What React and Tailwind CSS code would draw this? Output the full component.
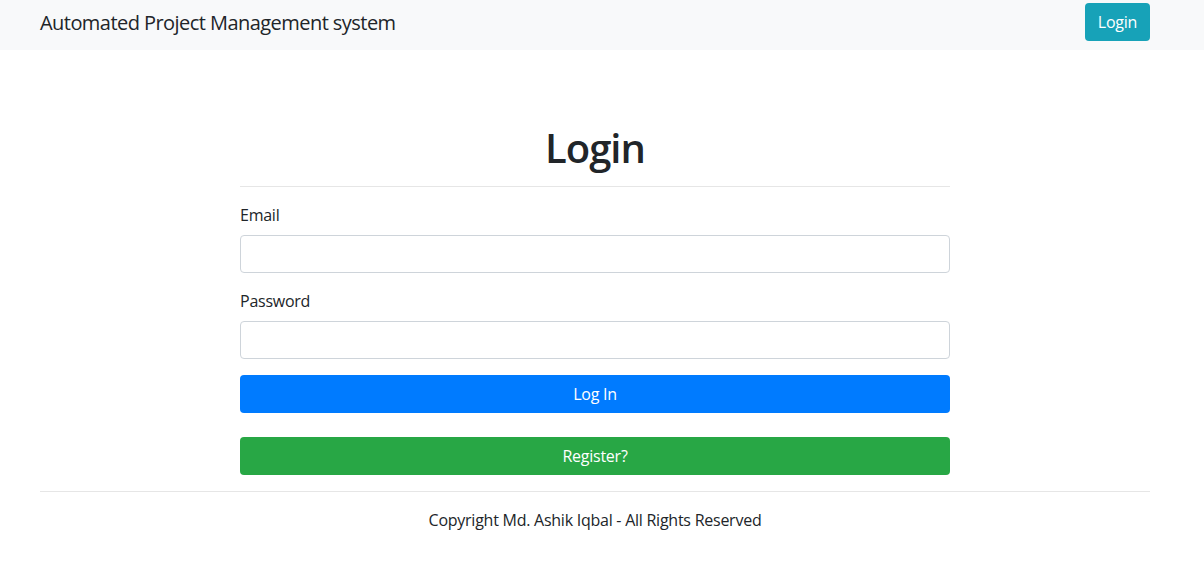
export default function App() {
  return (
    <div className="min-h-[576px] bg-white text-[#212529] font-['Open_Sans',sans-serif] tracking-[-0.25px]">
      <nav className="h-[50px] bg-[#f8f9fa] flex items-start justify-between pl-[40px] pr-[54px]">
        <div className="text-[20px] leading-[30px] mt-[8px] tracking-[-0.55px]">Automated Project Management system</div>
        <button className="mt-[3px] h-[38px] w-[65px] rounded-[4px] bg-[#17a2b8] text-white text-[16px]">Login</button>
      </nav>
      <div className="ml-[40px] w-[1110px]">
        <div className="ml-[200px] w-[710px]">
          <h1 className="mt-[74px] text-[40px] leading-[48px] font-semibold text-center tracking-[-1px]">Login</h1>
          <div className="mt-[14px] border-t border-[#e6e6e6]"></div>
          <div className="mt-[16px]">
            <label className="block text-[16px] leading-[24px] mb-[8px]">Email</label>
            <input className="block w-full h-[38px] border border-[#ced4da] rounded-[4px]" />
          </div>
          <div className="mt-[16px]">
            <label className="block text-[16px] leading-[24px] mb-[8px]">Password</label>
            <input type="password" className="block w-full h-[38px] border border-[#ced4da] rounded-[4px]" />
          </div>
          <button className="mt-[16px] block w-full h-[38px] rounded-[4px] bg-[#007bff] text-white text-[16px]">Log In</button>
          <button className="mt-[24px] block w-full h-[38px] rounded-[4px] bg-[#28a745] text-white text-[16px]">Register?</button>
        </div>
        <div className="mt-[16px] border-t border-[#e6e6e6]"></div>
        <p className="mt-[16px] text-center text-[16px] leading-[24px]">Copyright Md. Ashik Iqbal - All Rights Reserved</p>
      </div>
    </div>
  );
}
